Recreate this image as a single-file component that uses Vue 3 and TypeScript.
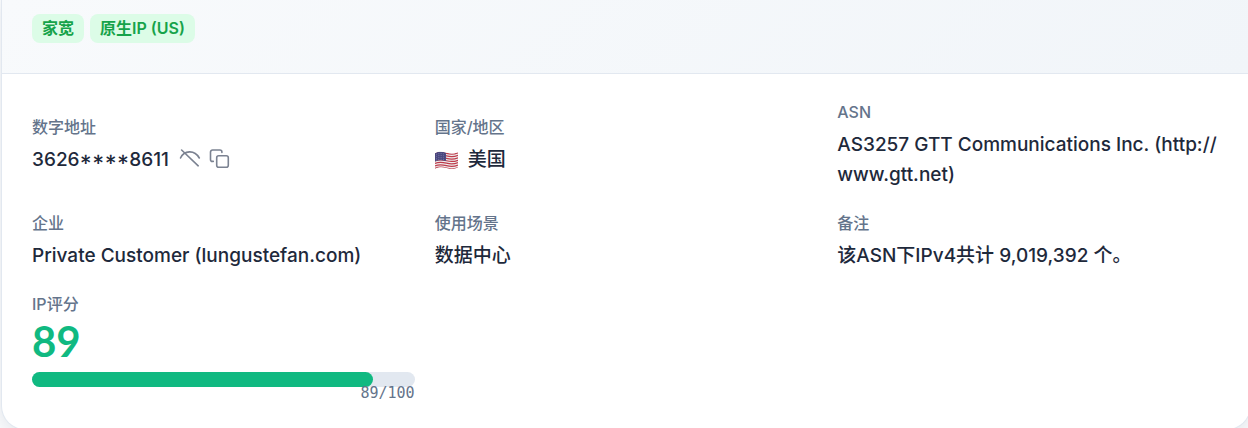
<script setup lang="ts">
import { computed, ref } from 'vue'

const tags: string[] = ['家宽', '原生IP (US)']
const score = ref<number>(89)
const maxScore = 100
const barWidth = computed(() => `${(score.value / maxScore) * 100}%`)
const address = '3626****8611'

function copyAddress(): void {
  navigator.clipboard?.writeText(address)
}
</script>

<template>
  <div class="page">
    <main class="card">
      <header class="head">
        <span v-for="tag in tags" :key="tag" class="tag">{{ tag }}</span>
      </header>
      <dl class="grid">
        <div class="item">
          <dt>数字地址</dt>
          <dd class="inline">
            <span class="address">{{ address }}</span>
            <span class="actions">
              <button type="button" aria-label="显示地址">
                <svg width="22" height="22" viewBox="0 0 22 22">
                  <path d="M1.500 9C5 1.300 15.500.3 20.300 9M2.600 1l16.600 15.800" />
                </svg>
              </button>
              <button type="button" aria-label="复制地址" @click="copyAddress">
                <svg width="22" height="22" viewBox="0 0 22 22">
                  <rect x="7.700" y="6.700" width="11.600" height="11.600" rx="2" />
                  <path d="M4.300 12.400H3.500a2 2 0 0 1-2-2V3a2 2 0 0 1 2-2h7.400a2 2 0 0 1 2 2v.5" />
                </svg>
              </button>
            </span>
          </dd>
        </div>
        <div class="item">
          <dt>国家/地区</dt>
          <dd class="inline">
            <svg class="flag" width="23" height="20" viewBox="0 0 23 20" aria-hidden="true">
              <defs>
                <clipPath id="flag-shape">
                  <path d="M0 3.200C4 1 7.500 1.700 11.500 2.800S19 4 23 2.300V17.300C19 19.500 15.500 18.900 11.500 17.900S4 16.900 0 18.700Z" />
                </clipPath>
              </defs>
              <g clip-path="url(#flag-shape)">
                <path fill="#eee" d="M0 0h24v20H0z" />
                <g fill="none" stroke="#bf3c4c" stroke-width="1.250">
                  <path
                    v-for="n in 7"
                    :key="n"
                    :transform="`translate(0 ${(n - 1) * 2.45})`"
                    d="M0 3.700C4 1.700 7.500 2.300 11.500 3.400S19 4.500 23 2.900"
                  />
                </g>
                <path fill="#49477f" d="M0 3.200C4 1 6.500 1.600 11 2.700v8.400C6.500 10 4 9.700 0 11.600Z" />
                <g fill="none" stroke="#a5a3c4" stroke-width=".6" stroke-dasharray=".7 1.200">
                  <path d="M1 4.500C4.500 3 6.500 3.200 10.500 4.200M1 6.500C4.500 5 6.500 5.200 10.500 6.200M1 8.500C4.500 7 6.500 7.200 10.500 8.200M1 10.300C4.500 8.800 6.500 9 10.500 10" />
                </g>
              </g>
            </svg>
            <span>美国</span>
          </dd>
        </div>
        <div class="item">
          <dt>ASN</dt>
          <dd>AS3257 GTT Communications Inc. (http://<wbr />www.gtt.net)</dd>
        </div>
        <div class="item">
          <dt>企业</dt>
          <dd>Private Customer (lungustefan.com)</dd>
        </div>
        <div class="item">
          <dt>使用场景</dt>
          <dd>数据中心</dd>
        </div>
        <div class="item">
          <dt>备注</dt>
          <dd>该ASN下IPv4共计 9,019,392 个。</dd>
        </div>
        <div class="item">
          <dt>IP评分</dt>
          <dd class="score">
            <strong>{{ score }}</strong>
            <div
              class="bar"
              role="progressbar"
              aria-label="IP评分"
              :aria-valuenow="score"
              aria-valuemin="0"
              :aria-valuemax="maxScore"
            >
              <div class="fill" :style="{ width: barWidth }"></div>
            </div>
            <span class="ratio">{{ score }}/{{ maxScore }}</span>
          </dd>
        </div>
      </dl>
    </main>
  </div>
</template>

<style>
body {
  margin: 0;
  background: #f8fafc;
}
</style>

<style scoped>
.page {
  height: 100vh;
  overflow: hidden;
  font-family: Inter, 'Noto Sans CJK SC', sans-serif;
  font-weight: 450;
}
.card {
  margin: 0 -3px 0 1px;
  border: 1px solid #e2e8f0;
  border-top: 0;
  border-radius: 0 0 24px 24px;
  background: #fff;
  box-shadow: 0 4px 16px rgba(15, 23, 42, 0.08);
  overflow: hidden;
}
.head {
  display: flex;
  gap: 6px;
  padding: 14px 30px 30px;
  border-bottom: 1px solid #e2e8f0;
  background: linear-gradient(135deg, #f8fafc, #f1f5f9);
}
.tag {
  padding: 0 10px;
  border-radius: 8px;
  background: #dcfce7;
  color: #16a34a;
  font-size: 16px;
  font-weight: 600;
  line-height: 29px;
}
.grid {
  display: grid;
  grid-template-columns: repeat(3, minmax(0, 1fr));
  align-items: center;
  gap: 20px;
  margin: 0;
  padding: 25px 30px 30px;
}
.item {
  display: flex;
  flex-direction: column;
  gap: 5px;
}
dt {
  color: #64748b;
  font-size: 16px;
  line-height: 26px;
}
dd {
  margin: 0;
  color: #1e293b;
  font-size: 19px;
  line-height: 30px;
}
.inline {
  display: flex;
  align-items: center;
  gap: 10px;
}
.address {
  font-feature-settings: 'case' 1;
}
.actions {
  display: flex;
  gap: 8px;
}
button {
  display: flex;
  padding: 0;
  border: 0;
  background: none;
  cursor: pointer;
}
button svg {
  fill: none;
  stroke: #7b8291;
  stroke-width: 1.6;
  stroke-linecap: round;
  stroke-linejoin: round;
}
.score {
  display: flex;
  flex-direction: column;
}
.score strong {
  color: #10b981;
  font-family: Lato, Inter, sans-serif;
  font-size: 42px;
  font-weight: 700;
  line-height: 38px;
}
.bar {
  height: 15px;
  margin-top: 12px;
  border-radius: 8px;
  background: #e2e8f0;
}
.fill {
  height: 100%;
  border-radius: 8px;
  background: #10b981;
}
.ratio {
  align-self: flex-end;
  color: #64748b;
  font-family: 'DejaVu Sans Mono', monospace;
  font-size: 15px;
  font-weight: 400;
  line-height: 12px;
}
</style>
